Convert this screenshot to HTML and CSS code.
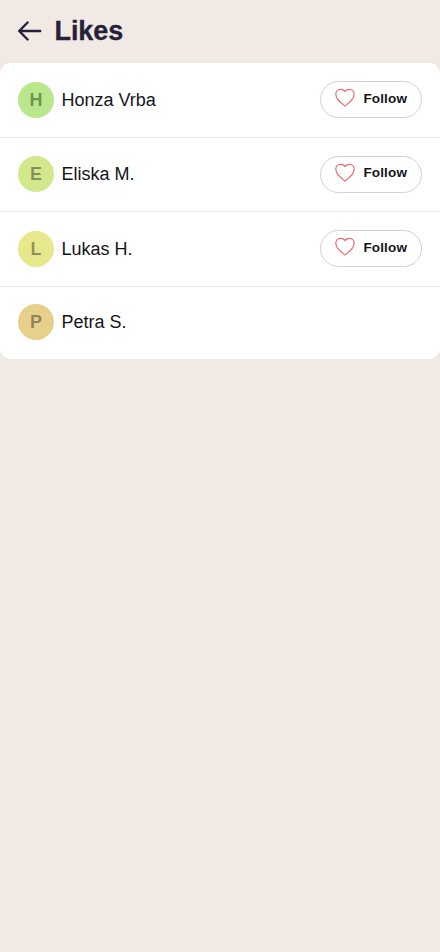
FILE: index.html
```html
<!DOCTYPE html>
<html lang="en">
<head>
<meta charset="utf-8">
<meta name="viewport" content="width=device-width, initial-scale=1">
<title>Likes</title>
<link rel="stylesheet" href="styles.css">
</head>
<body>
<header class="header">
  <svg class="back" width="24" height="20" viewBox="0 0 24 20" aria-hidden="true"><path d="M9.600 1.500 1.200 10l8.400 8.500M1.200 10H22.200"/></svg>
  <h1 class="title">Likes</h1>
</header>
<main class="list">
  <div class="row">
    <div class="avatar green">H</div><div class="name">Honza Vrba</div>
    <button class="follow"><svg class="heart" width="20" height="19" viewBox="0 0 20 19"><path d="M10 18C7.500 16.200.8 11.500.8 6.200.8 3.300 3 1.300 5.600 1.300 7.500 1.300 9.100 2.200 10 3.400 10.900 2.200 12.500 1.300 14.400 1.300c2.600 0 4.800 2 4.800 4.900C19.200 11.500 12.500 16.200 10 18Z"/></svg>Follow</button>
  </div>
  <div class="row">
    <div class="avatar lime">E</div><div class="name">Eliska M.</div>
    <button class="follow"><svg class="heart" width="20" height="19" viewBox="0 0 20 19"><path d="M10 18C7.500 16.200.8 11.500.8 6.200.8 3.300 3 1.300 5.600 1.300 7.500 1.300 9.100 2.200 10 3.400 10.900 2.200 12.500 1.300 14.400 1.300c2.600 0 4.800 2 4.800 4.900C19.200 11.500 12.500 16.200 10 18Z"/></svg>Follow</button>
  </div>
  <div class="row">
    <div class="avatar yellow">L</div><div class="name">Lukas H.</div>
    <button class="follow"><svg class="heart" width="20" height="19" viewBox="0 0 20 19"><path d="M10 18C7.500 16.200.8 11.500.8 6.200.8 3.300 3 1.300 5.600 1.300 7.500 1.300 9.100 2.200 10 3.400 10.900 2.200 12.500 1.300 14.400 1.300c2.600 0 4.800 2 4.800 4.900C19.200 11.500 12.500 16.200 10 18Z"/></svg>Follow</button>
  </div>
  <div class="row last">
    <div class="avatar orange">P</div><div class="name">Petra S.</div>
  </div>
</main>
</body>
</html>
```
FILE: styles.css
```css
* { box-sizing: border-box; }
body {
  margin: 0;
  min-height: 952px;
  background: #f1e9e4;
  color: #151518;
  font-family: "Liberation Sans", Arial, sans-serif;
}
.header { display: flex; align-items: center; height: 63px; padding: 0 18px; }
.back { margin: 0 12.5px 1px 0; fill: none; stroke: #26213a; stroke-width: 2.4; stroke-linecap: round; stroke-linejoin: round; }
.title { margin: 0 0 2px; color: #26213a; font-size: 27px; line-height: 32px; font-weight: 700; -webkit-text-stroke: .3px #26213a; letter-spacing: -.1px; }
.list { background: #fff; border-radius: 11px; overflow: hidden; }
.row {
  display: flex;
  align-items: center;
  height: 74.5px;
  padding: 0 18px;
  border-bottom: 1px solid #e8e7e6;
}
.last { height: 72px; border-bottom: 0; }
.avatar {
  width: 36px;
  height: 36px;
  margin-right: 7.4px;
  border-radius: 50%;
  color: rgba(0, 0, 0, .38);
  font-size: 18px;
  font-weight: 700;
  line-height: 36px;
  text-align: center;
}
.green { background: #b9e78c; }
.lime { background: #d3e78c; }
.yellow { background: #e7e78c; }
.orange { background: #e7d08c; }
.name { flex: 1; font-size: 18px; line-height: 24px; }
.last .avatar { margin-top: -1px; }
.last .name { margin-top: -2px; }
.follow {
  display: flex;
  align-items: center;
  width: 102px;
  height: 37px;
  padding: 0 0 2px 14px;
  border: 1px solid #d4d1cf;
  border-radius: 19px;
  background: #fff;
  color: #151518;
  font: 700 13.5px/18px "Liberation Sans", Arial, sans-serif;
  letter-spacing: .15px;
}
.heart { margin: -2px 8.4px 0 0; fill: none; stroke: #ef6a6a; stroke-width: 1.2; }
```
